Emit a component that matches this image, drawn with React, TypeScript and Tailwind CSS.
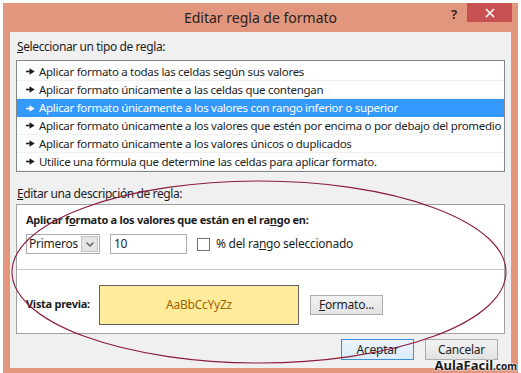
import React from "react";

const reglas = [
  "Aplicar formato a todas las celdas según sus valores",
  "Aplicar formato únicamente a las celdas que contengan",
  "Aplicar formato únicamente a los valores con rango inferior o superior",
  "Aplicar formato únicamente a los valores que estén por encima o por debajo del promedio",
  "Aplicar formato únicamente a los valores únicos o duplicados",
  "Utilice una fórmula que determine las celdas para aplicar formato.",
];

const Flecha = ({ color }: { color: string }) => (
  <svg width="9" height="7" viewBox="0 0 9 7" className="shrink-0">
    <rect x="0" y="2.7" width="4" height="1.6" fill={color} />
    <polygon points="3.5,0.3 8.7,3.5 3.5,6.7" fill={color} />
  </svg>
);

const App = () => {
  const seleccionada = 2;

  return (
    <div
      className="relative w-[521px] h-[373px] overflow-hidden bg-white pt-[3px] px-[3px] text-[12px] tracking-[-0.25px] text-[#1e1e1e]"
      style={{ fontFamily: '"Noto Sans", "Open Sans", sans-serif' }}
    >
      {/* ventana */}
      <div className="flex flex-col w-[515px] h-[370px] bg-[#e1967d]">
        {/* barra de titulo */}
        <div className="relative flex items-center justify-center h-[29px] shrink-0">
          <span className="text-[14px] tracking-normal text-[#2a2320] -mt-[1px]">
            Editar regla de formato
          </span>
          <div className="absolute right-[6px] top-0 flex items-start">
            <span className="mr-[10px] mt-[2px] text-[13px] font-bold text-[#3a2a22]">?</span>
            <div className="flex items-center justify-center w-[45px] h-[19px] bg-[#c75050]">
              <svg width="10" height="10" viewBox="0 0 10 10">
                <path d="M1 1 L9 9 M9 1 L1 9" stroke="white" strokeWidth="1.6" />
              </svg>
            </div>
          </div>
        </div>

        {/* contenido */}
        <div className="flex flex-col mx-[7px] h-[336px] bg-[#f0f0f0] px-[6px]">
          <div className="h-[28px] flex items-center pl-[1px] pt-[2px] tracking-[-0.4px]">
            <span>
              <span className="underline">S</span>eleccionar un tipo de regla:
            </span>
          </div>

          {/* lista de reglas */}
          <div className="h-[112px] border border-[#828790] bg-white pt-[2px] text-[11.5px] tracking-[-0.3px]">
            {reglas.map((r, i) => (
              <div
                key={i}
                className={
                  i === seleccionada
                    ? "flex items-center gap-[4px] h-[18px] pl-[9px] bg-[#3399ff] text-white"
                    : "flex items-center gap-[4px] h-[18px] pl-[9px] border-b border-[#f0f0f0]"
                }
              >
                <Flecha color={i === seleccionada ? "#ffffff" : "#1e1e1e"} />
                <span className="whitespace-nowrap">{r}</span>
              </div>
            ))}
          </div>

          <div className="h-[32px] flex items-end pb-[1px] pl-[1px] tracking-[-0.4px]">
            <span>
              <span className="underline">E</span>ditar una descripción de regla:
            </span>
          </div>

          {/* descripcion */}
          <div className="h-[130px] border border-[#a0a0a0] bg-white flex flex-col">
            <div className="h-[65px] border-b border-[#c8c8c8] pl-[9px] pt-[7px]">
              <div className="h-[17px] font-bold text-[11px] tracking-[-0.28px]">
                Aplicar f<span className="underline">o</span>rmato a los valores que están en el ra
                <span className="underline">n</span>go en:
              </div>
              <div className="flex items-center mt-[5px] h-[20px]">
                <div className="flex items-center justify-between w-[74px] h-[20px] border border-[#acacac] bg-white pl-[2px] pr-[1px]">
                  <span>Primeros</span>
                  <div className="flex items-center justify-center w-[17px] h-[16px] bg-[#e5e5e5] border border-[#c4c4c4]">
                    <svg width="8" height="5" viewBox="0 0 8 5">
                      <path d="M0.5 0.5 L4 4 L7.5 0.5" stroke="#606060" strokeWidth="1.4" fill="none" />
                    </svg>
                  </div>
                </div>
                <div className="flex items-center w-[77px] h-[20px] ml-[10px] border border-[#abadb3] bg-white pl-[3px]">
                  10
                </div>
                <div className="w-[13px] h-[13px] ml-[10px] border border-[#707070] bg-white" />
                <span className="ml-[6px]">
                  % del ra<span className="underline">n</span>go seleccionado
                </span>
              </div>
            </div>
            <div className="flex items-start pl-[9px] pt-[15px]">
              <span className="font-bold text-[11px] tracking-[-0.28px] mt-[11px] w-[73px]">
                Vista previa:
              </span>
              <div className="flex items-center justify-center w-[200px] h-[40px] border border-[#646464] bg-[#ffeb9c] text-[#9c6500]">
                AaBbCcYyZz
              </div>
              <div className="flex items-center justify-center w-[73px] h-[20px] ml-[11px] mt-[10px] border border-[#acacac] bg-gradient-to-b from-[#f2f2f2] to-[#e3e3e3]">
                <span>
                  <span className="underline">F</span>ormato...
                </span>
              </div>
            </div>
          </div>

          {/* botones */}
          <div className="flex justify-end gap-[11px] pt-[5px] pr-[7px]">
            <div className="flex items-center justify-center w-[73px] h-[21px] border border-[#3c8fd8] bg-gradient-to-b from-[#ecf4fc] to-[#dcecfc]">
              Aceptar
            </div>
            <div className="flex items-center justify-center w-[73px] h-[21px] border border-[#acacac] bg-gradient-to-b from-[#f2f2f2] to-[#e3e3e3]">
              Cancelar
            </div>
          </div>
        </div>
      </div>

      {/* circulo rojo dibujado */}
      <svg className="absolute left-0 top-0 pointer-events-none" width="521" height="373">
        <ellipse cx="259" cy="272" rx="247" ry="91" fill="none" stroke="#8b1c3b" strokeWidth="1.1" />
      </svg>

      {/* marca de agua */}
      <div
        className="absolute right-[4px] bottom-[1px] font-bold text-[#1a1a1a] tracking-normal leading-none"
        style={{ textShadow: "0 0 2px #fff, 0 0 2px #fff, 0 0 1px #fff" }}
      >
        <span className="text-[13px]">AulaFacil</span>
        <span className="text-[10px]">.com</span>
      </div>
    </div>
  );
};

export default App;
